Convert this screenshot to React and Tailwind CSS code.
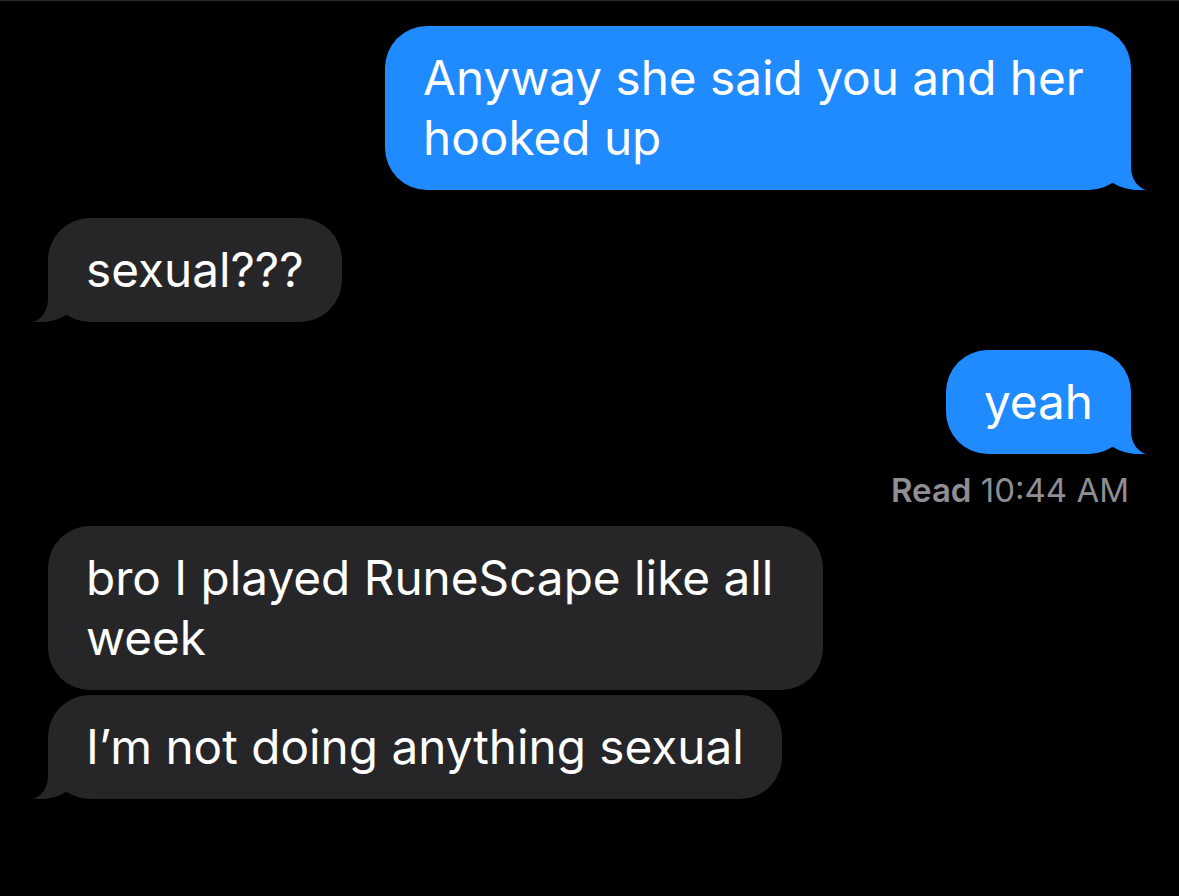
import React from 'react';

const messages = [
  { id: 1, from: 'me', lines: 'Anyway she said you and her hooked up', tail: true, width: 'w-[746px]' },
  { id: 2, from: 'them', lines: 'sexual???', tail: true },
  { id: 3, from: 'me', lines: 'yeah', tail: true, read: '10:44 AM' },
  { id: 4, from: 'them', lines: 'bro I played RuneScape like all week', tail: false, width: 'w-[775px]' },
  { id: 5, from: 'them', lines: 'I’m not doing anything sexual', tail: true, grouped: true },
];

// tail drawn for the bottom-right corner, mirrored for incoming bubbles
const Tail = ({ color, mirrored }) => (
  <svg
    width="40"
    height="50"
    viewBox="0 0 40 50"
    className={
      mirrored
        ? 'absolute bottom-0 left-[-16px] -scale-x-100'
        : 'absolute bottom-0 right-[-16px]'
    }
  >
    <path d="M24 0 L24 26 C24 39 30 47 39 50 C29 51 14 49 5 42 L5 0 Z" fill={color} />
  </svg>
);

const Bubble = ({ msg }) => {
  const mine = msg.from === 'me';
  const color = mine ? '#1f8bff' : '#262628';
  return (
    <div className={`flex ${mine ? 'justify-end' : 'justify-start'}`}>
      <div
        className={`relative ${msg.width || ''} rounded-[42px] px-[38px] py-[22px] text-[47.7px] leading-[60px] text-white ${
          mine ? 'bg-[#1f8bff]' : 'bg-[#262628]'
        }`}
      >
        {msg.lines}
        {msg.tail && <Tail color={color} mirrored={!mine} />}
      </div>
    </div>
  );
};

export default function App() {
  return (
    <div
      className="min-h-[896px] w-[1179px] bg-black"
      style={{ fontFamily: 'Inter, "Noto Sans", sans-serif' }}
    >
      <div className="h-px bg-[#2a2a2a]" />
      <div className="flex flex-col px-[48px] pt-[25px]">
        {messages.map((m) => (
          <div key={m.id} className={m.grouped ? 'mt-[5px]' : m.id === 1 ? '' : m.id === 4 ? 'mt-[20px]' : 'mt-[28px]'}>
            <Bubble msg={m} />
            {m.read && (
              <div className="mt-[20px] mr-[2px] text-right text-[33px] leading-[32px] text-[#8e8e93]">
                <span className="font-semibold">Read</span> {m.read}
              </div>
            )}
          </div>
        ))}
      </div>
    </div>
  );
}
